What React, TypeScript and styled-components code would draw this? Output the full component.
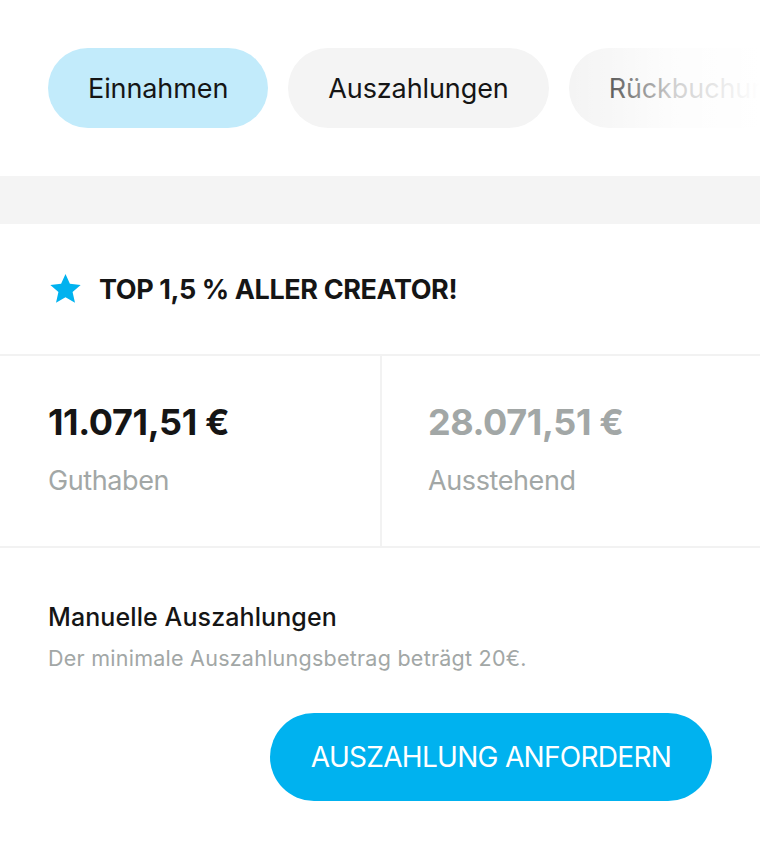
import React from 'react';
import styled, { createGlobalStyle } from 'styled-components';

const GlobalStyle = createGlobalStyle`
    html, body {
        margin: 0;
        padding: 0;
        background: #ffffff;
        font-family: Inter, "Noto Sans", sans-serif;
        color: #151515;
    }
`;

const Page = styled.div`
    width: 760px;
    overflow: hidden;
`;

const TabStrip = styled.div`
    position: relative;
    display: flex;
    gap: 20px;
    padding: 48px;
    overflow: hidden;
`;

// white fade over the tabs that run off the right edge
const TabFade = styled.div`
    position: absolute;
    top: 0;
    right: 0;
    bottom: 0;
    width: 190px;
    background: linear-gradient(to right, rgba(255, 255, 255, 0) 0%, rgba(255, 255, 255, 0.8) 55%, #ffffff 100%);
    pointer-events: none;
`;

const Tab = styled.button<{ $active?: boolean }>`
    flex: 0 0 auto;
    height: 80px;
    padding: 0 40px;
    border: none;
    border-radius: 40px;
    background: ${p => (p.$active ? '#c2ebfb' : '#f4f4f4')};
    color: #151515;
    font-family: Inter, sans-serif;
    font-size: 27px;
    font-weight: 400;
    letter-spacing: -0.1px;
    white-space: nowrap;
`;

const Band = styled.div`
    height: 48px;
    background: #f4f4f4;
`;

const Highlight = styled.div`
    display: flex;
    align-items: center;
    gap: 16px;
    height: 130px;
    padding: 0 48px;
    border-bottom: 2px solid #f2f2f2;
    font-size: 27px;
    font-weight: 700;
    letter-spacing: -0.4px;
`;

const Stats = styled.div`
    display: grid;
    grid-template-columns: 380px 1fr;
    border-bottom: 2px solid #f2f2f2;
`;

const Stat = styled.div`
    display: flex;
    flex-direction: column;
    gap: 19px;
    height: 190px;
    padding: 42px 48px 0 48px;
    box-sizing: border-box;
    & + & {
        border-left: 2px solid #f2f2f2;
        padding-left: 46px;
    }
`;

const Amount = styled.div<{ $muted?: boolean }>`
    font-size: 36px;
    font-weight: 700;
    letter-spacing: -0.4px;
    line-height: 48px;
    color: ${p => (p.$muted ? '#a2a7a6' : '#151515')};
`;

const StatLabel = styled.div`
    font-size: 27px;
    line-height: 32px;
    letter-spacing: -0.4px;
    color: #a2a7a6;
`;

const Payout = styled.div`
    display: flex;
    flex-direction: column;
    padding: 51px 48px 48px 48px;
`;

const PayoutTitle = styled.div`
    font-size: 25px;
    font-weight: 500;
    line-height: 36px;
    letter-spacing: 0.1px;
`;

const PayoutNote = styled.div`
    margin-top: 9px;
    font-size: 21.5px;
    line-height: 28px;
    letter-spacing: 0.25px;
    color: #a2a7a6;
`;

const PrimaryButton = styled.button`
    align-self: flex-end;
    margin-top: 41px;
    width: 442px;
    height: 88px;
    border: none;
    border-radius: 44px;
    background: #00b2ef;
    color: #ffffff;
    font-family: Inter, sans-serif;
    font-size: 28px;
    font-weight: 400;
    letter-spacing: -0.7px;
`;

function Star() {
    return (
        <svg width="35" height="34" viewBox="0 0 24 24">
            <path
                d="M12 1.4l3.1 6.9 7.6.8-5.7 5.1 1.7 7.5L12 17.9l-6.7 3.8L7 14.2 1.3 9.1l7.6-.8z"
                fill="#00b2ef"
            />
        </svg>
    );
}

export default function App() {
    return (
        <Page>
            <GlobalStyle />
            <TabStrip>
                <Tab $active>Einnahmen</Tab>
                <Tab>Auszahlungen</Tab>
                <Tab>Rückbuchungen</Tab>
                <TabFade />
            </TabStrip>
            <Band />
            <Highlight>
                <Star />
                TOP 1,5 % ALLER CREATOR!
            </Highlight>
            <Stats>
                <Stat>
                    <Amount>11.071,51 €</Amount>
                    <StatLabel>Guthaben</StatLabel>
                </Stat>
                <Stat>
                    <Amount $muted>28.071,51 €</Amount>
                    <StatLabel>Ausstehend</StatLabel>
                </Stat>
            </Stats>
            <Payout>
                <PayoutTitle>Manuelle Auszahlungen</PayoutTitle>
                <PayoutNote>Der minimale Auszahlungsbetrag beträgt 20€.</PayoutNote>
                <PrimaryButton>AUSZAHLUNG ANFORDERN</PrimaryButton>
            </Payout>
        </Page>
    );
}
